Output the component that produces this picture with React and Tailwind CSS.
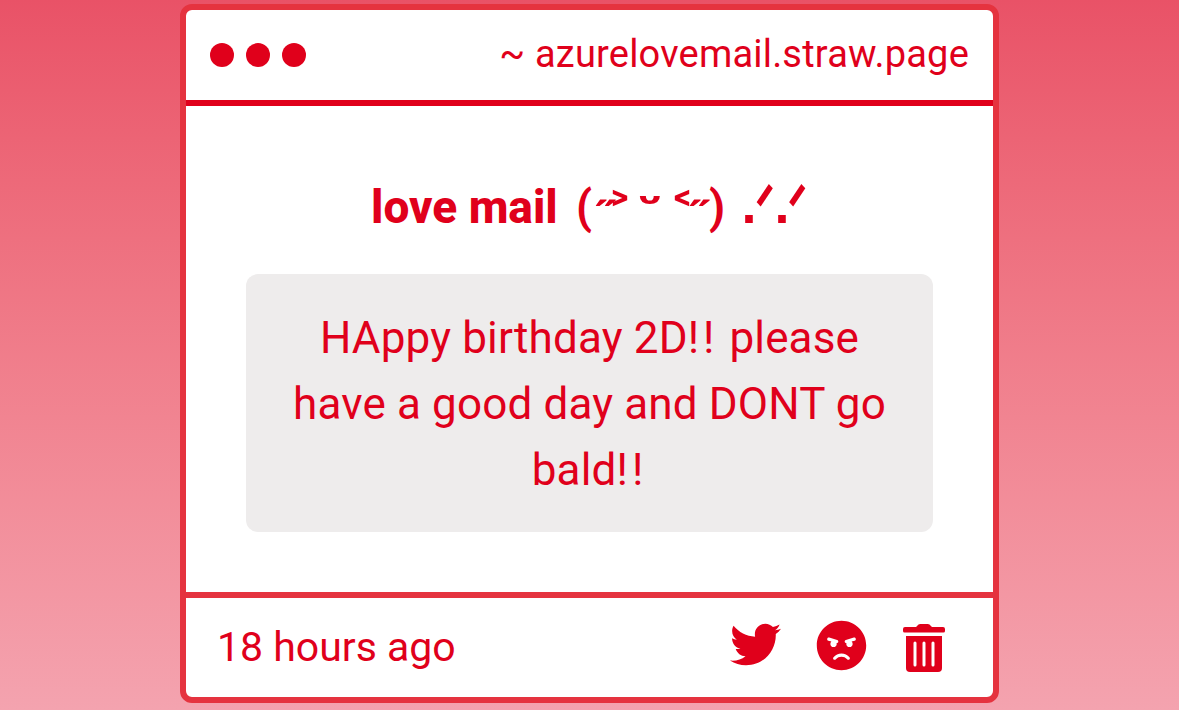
import React from 'react';
import { FaTwitter, FaAngry } from 'react-icons/fa';

const messageParts = ['HAppy birthday 2D', ' please have a good day and DONT go bald'];

// each glyph sits in its own cell so the face keeps its shape across fallback fonts
const kaomoji = [
  { char: '(', className: 'w-[22px] font-bold' },
  { char: '˶', className: 'w-[22px] -translate-y-[13px] scale-x-110' },
  { char: '˃', className: 'w-[6px] translate-y-[9px] scale-x-120 text-[50px]' },
  { char: 'ᵕ', className: 'w-[54px] -translate-y-[3px] scale-x-110 text-[48px]' },
  { char: '˂', className: 'w-[10px] translate-y-[9px] scale-x-120 text-[50px]' },
  { char: '˶', className: 'w-[26px] -translate-y-[13px] scale-x-110' },
  { char: ')', className: 'w-2 font-bold' },
  { char: '.', className: 'ml-5 w-4 font-[Liberation_Sans] text-[54px]' },
  { char: 'ᐟ', className: 'w-4 translate-y-[3px] scale-x-80 text-[58px]' },
  { char: '.', className: 'ml-px w-4 font-[Liberation_Sans] text-[54px]' },
  { char: 'ᐟ', className: 'w-[15px] translate-y-[3px] scale-x-80 text-[58px]' },
];

function TrashIcon() {
  return (
    <svg className="h-12 w-[42px]" viewBox="0 0 42 48" fill="currentColor">
      <path d="M2 3h11l2.500-2.400Q16.200 0 17.200 0h7.600q1 0 1.700.6L29 3h11q2 0 2 2v2q0 1.500-1.500 1.500h-39Q0 8.500 0 7V5q0-2 2-2Z" />
      <path d="M3 12h36v32q0 4-4 4H7q-4 0-4-4Z" />
      <path d="M12 19v22M21 19v22M30 19v22" stroke="white" strokeWidth="3" strokeLinecap="round" />
    </svg>
  );
}

function WindowHeader() {
  return (
    <div className="flex h-24 shrink-0 items-center justify-between border-b-6 border-[#e0001b] px-6">
      <div className="flex gap-3">
        <span className="size-6 rounded-full bg-[#e0001b]" />
        <span className="size-6 rounded-full bg-[#e0001b]" />
        <span className="size-6 rounded-full bg-[#e0001b]" />
      </div>
      <p className="pb-0.5 text-[38px] leading-none tracking-[0.2px] whitespace-nowrap">~ azurelovemail.straw.page</p>
    </div>
  );
}

function WindowFooter() {
  return (
    <div className="flex h-[105px] shrink-0 items-center justify-between border-t-6 border-[#e5333f] pr-12 pl-[31px]">
      <p className="text-[41px] leading-none whitespace-nowrap">18 hours ago</p>
      <div className="flex items-center gap-[35px]">
        <FaTwitter className="mb-1.5 size-[51px]" />
        <FaAngry className="mr-px mb-[5px] size-[51px]" />
        <TrashIcon />
      </div>
    </div>
  );
}

export default function App() {
  return (
    <div
      className="flex h-[710px] justify-center overflow-hidden bg-linear-to-b from-[#e95267] to-[#f4a3af] pt-1 text-[#e0001b]"
      style={{ fontFamily: 'Roboto, "DejaVu Sans", sans-serif' }}
    >
      <div className="flex h-[699px] w-[819px] flex-col overflow-hidden rounded-xl border-6 border-[#e5333f] bg-white">
        <WindowHeader />
        <div className="flex flex-1 flex-col px-[60px] pt-[62px]">
          <h1 className="flex h-[106px] items-baseline pl-[125px] text-[46px] leading-[70px] font-bold whitespace-nowrap">
            <span className="w-[202px] font-extrabold">love mail</span>
            {kaomoji.map((glyph, i) => (
              <span key={i} className={`flex justify-center ${glyph.className}`}>
                {glyph.char}
              </span>
            ))}
          </h1>
          <div className="w-full rounded-xl bg-[#eeecec] px-[30px] pt-[31px] pb-[29px]">
            <p className="text-center text-[44px] leading-[66px] tracking-[0.15px]">
              {messageParts.map((part) => (
                <React.Fragment key={part}>
                  {part}
                  <span className="tracking-[4px]">!!</span>
                </React.Fragment>
              ))}
            </p>
          </div>
        </div>
        <WindowFooter />
      </div>
    </div>
  );
}
